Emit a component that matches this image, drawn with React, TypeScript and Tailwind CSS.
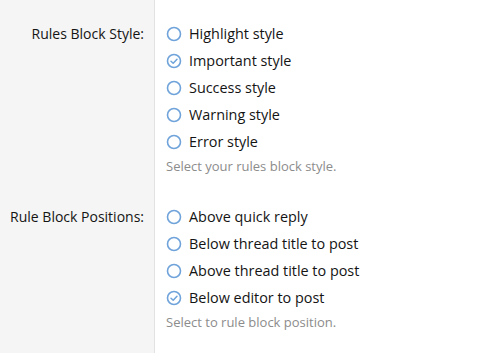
import React from "react";

const Radio = ({ checked }: { checked?: boolean }) => (
  <svg width="16" height="16" viewBox="0 0 16 16" className="shrink-0">
    <circle cx="8" cy="8" r="6.5" fill="none" stroke="#6fa3da" strokeWidth="1.6" />
    {checked && (
      <path d="M5 8.2 L7.2 10.3 L11 6.2" fill="none" stroke="#6fa3da" strokeWidth="1.5" strokeLinecap="round" strokeLinejoin="round" />
    )}
  </svg>
);

const Section = ({
  label,
  options,
  checked,
  hint,
}: {
  label: string;
  options: string[];
  checked: number;
  hint: string;
}) => (
  <div className="flex">
    <div className="w-[155px] shrink-0 bg-[#f5f5f5] border-r border-[#e2e2e2] pt-[20px] pr-[10px] text-right">
      <div className="h-[27px] leading-[27px] text-[14px] text-[#141414]">{label}</div>
    </div>
    <div className="flex-1 bg-white pt-[20px] pb-[5px] pl-[11px]">
      {options.map((o, i) => (
        <div key={o} className="flex items-center h-[27px] gap-[7px]">
          <Radio checked={i === checked} />
          <span className="text-[14.4px] text-[#141414] leading-[27px]">{o}</span>
        </div>
      ))}
      <div className="h-[23px] leading-[23px] text-[13px] text-[#8c8c8c]">{hint}</div>
    </div>
  </div>
);

export default function App() {
  return (
    <div className="w-[479px] h-[353px] overflow-hidden flex flex-col bg-white" style={{ fontFamily: '"Open Sans", "Noto Sans", sans-serif' }}>
      <Section
        label="Rules Block Style:"
        options={["Highlight style", "Important style", "Success style", "Warning style", "Error style"]}
        checked={1}
        hint="Select your rules block style."
      />
      <Section
        label="Rule Block Positions:"
        options={["Above quick reply", "Below thread title to post", "Above thread title to post", "Below editor to post"]}
        checked={3}
        hint="Select to rule block position."
      />
      <div className="flex flex-1">
        <div className="w-[155px] bg-[#f5f5f5] border-r border-[#e2e2e2]" />
        <div className="flex-1" />
      </div>
    </div>
  );
}
